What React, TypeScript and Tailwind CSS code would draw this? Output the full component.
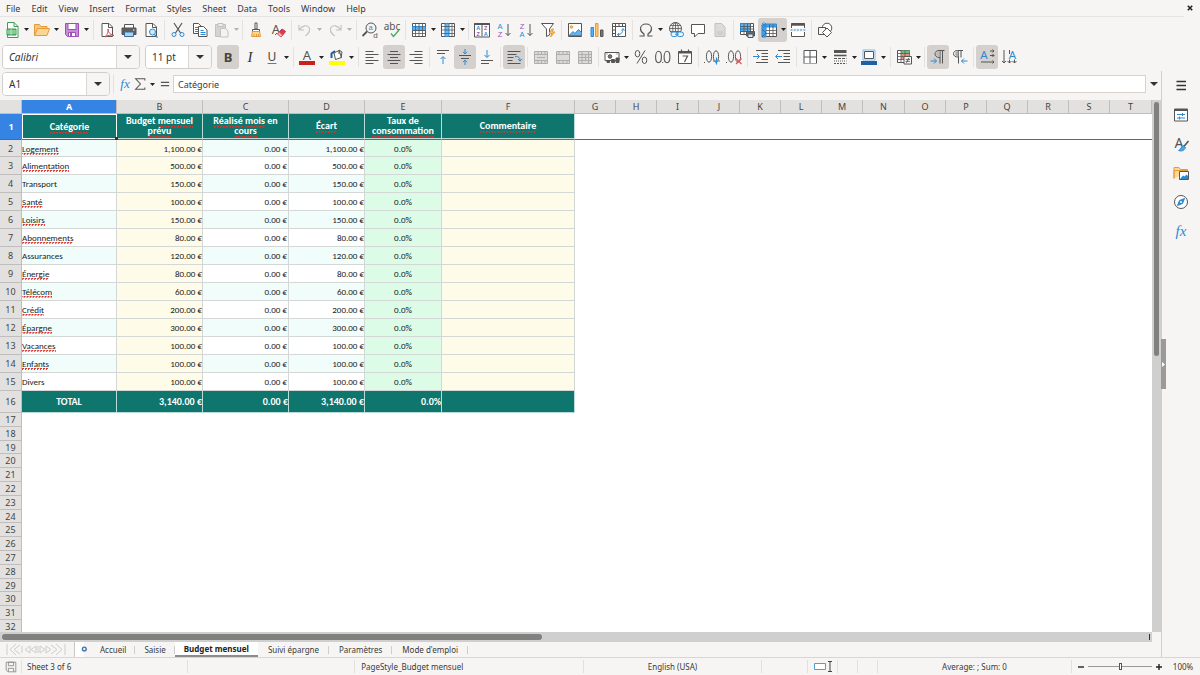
import React from "react";

const G = "#555555";
const B = "#2a8ad4";
const O = "#e59a3c";
const P = "#a04fb8";
const L = "#c4c2c0";

const ui = "font-['Noto_Sans',sans-serif]";
const cellFont = "font-[Carlito,Lato,sans-serif]";

function Svg({ children, size = "size-4" }: { children: React.ReactNode; size?: string }) {
  return (
    <svg viewBox="0 0 16 16" className={`${size} shrink-0 overflow-visible`} fill="none" stroke={G} strokeWidth="1" aria-hidden="true">
      {children}
    </svg>
  );
}

function Letter({ x, y, s, c = G, w = "400", f = "Noto Sans, sans-serif", i, children }: {
  x: number; y: number; s: number; c?: string; w?: string; f?: string; i?: boolean; children: string;
}) {
  return (
    <text x={x} y={y} fontSize={s} fill={c} stroke="none" fontWeight={w} fontFamily={f} fontStyle={i ? "italic" : "normal"} textAnchor="middle">
      {children}
    </text>
  );
}

const sans = "Liberation Sans, sans-serif";
const page = "M3 1.5h7l3.5 3.5v9.5H3z";

const icons: Record<string, React.ReactNode> = {
  newDoc: (<><path d="M3.500 .5h6.500l4 4v11h-10.500z" fill="#fff" stroke="#3f9c57" /><path d="M10 .5v4h4" stroke="#3f9c57" /><path d="M3 7h9v6H3z" fill="#57b96c" stroke="#3a9a50" /><path d="M3 9h9M3 11h9M7 7v6" stroke="#d9f3de" strokeWidth=".7" /></>),
  open: (<><path d="M.5 13.500V2.500h5l1.500 2h6v3" fill="#f7c774" stroke={O} /><path d="M.5 13.500 3.500 6.500h12l-2.500 7z" fill="#fbd793" stroke={O} /></>),
  save: (<><path d="M1.500 1.500h13v13h-11l-2-2z" fill="#c98bd8" stroke={P} /><path d="M4 1.500h8v6H4z" fill="#fff" stroke={P} /><path d="M4.500 10.500h7v4h-7z" fill="#fff" stroke={P} /><path d="M6 11v3h2v-3z" fill={P} stroke="none" /></>),
  pdf: (<><path d={page} fill="#fff" /><path d="M9.500 1.500v4h4" /><path d="M6 15c3-3 4-8 3-8s1 6 6 6.500c-3-1-7 0-9 1.500z" fill="#fff" stroke="#dc4452" /></>),
  print: (<><path d="M3.500 6V2.500h9V6" stroke={G} fill="#fff" /><path d="M1 6h14v6.500H1z" fill="#5c6063" stroke={G} /><path d="M3.500 10h9v4.500h-9z" fill="#a9d3f3" stroke="#3c6e96" /><path d="M12 8h1.500" stroke="#fff" /></>),
  preview: (<><path d={page} fill="#fff" /><path d="M9.500 1.500v4h4" /><circle cx="9.500" cy="10" r="3" fill="#cfe7f9" stroke={B} /><path d="m11.500 12.500 3 3" stroke={B} strokeWidth="1.300" /></>),
  cut: (<><path d="m4 1 6.500 10M12 1 5.500 11" strokeWidth="1.200" /><circle cx="4" cy="12.500" r="2" stroke={B} /><circle cx="12" cy="12.500" r="2" stroke={B} /></>),
  copy: (<><path d="M1.500 1.500h5l3 3v7h-8z" fill="#fff" /><path d="M3 5.500h3M3 7.500h3M3 9.500h3" stroke={B} /><path d="M6.500 4.500h5l3.500 3.500v6.500H6.500z" fill="#fff" /><path d="M8.500 8.500h3M8.500 10.500h5M8.500 12.500h5" stroke={B} /></>),
  paste: (<><path d="M1.500 2.500h10v12h-10z" fill="#d5d3d1" stroke={L} /><path d="M4 1.500h5v3H4z" fill="#eee" stroke={L} /><path d="M6.500 6.500h5l2.500 2.500v6H6.500z" fill="#f4f3f2" stroke={L} /></>),
  brush: (<><path d="M7 1h2v6H7z" fill="#fff" /><path d="M4.500 7.500h7v2h-7z" fill="#fff" /><path d="M4.500 9.500h7l1 5h-9z" fill="#fbd793" stroke={O} /><path d="M6 12v2M8.500 12v2M10.500 12v2" stroke={O} /></>),
  clear: (<><Letter x={6} y={11.500} s={13}>A</Letter><path d="m5 13 2-2M7.500 12 12 7l3.500 2.500-4 5z" fill="#e2394a" stroke="#c32a3c" /><path d="m7.500 12 1.500-2 3.500 3-1.500 2z" fill="#f5b9bf" stroke="#d66" /></>),
  undo: (<path d="M2 3v5h5M2.500 8C5 3.500 10 2.500 12 5.500S12 11 8.500 14" stroke={L} strokeWidth="1.200" />),
  redo: (<path d="M14 3v5H9M13.500 8C11 3.500 6 2.500 4 5.500S4 11 7.500 14" stroke={L} strokeWidth="1.200" />),
  find: (<><circle cx="9" cy="6" r="5" /><path d="M5 9.500.5 14" strokeWidth="1.800" /><Letter x={8.500} y={8} s={7.500} f={sans} c={B}>a</Letter><Letter x={13.500} y={15.500} s={8} f={sans}>d</Letter></>),
  spell: (<><Letter x={8} y={7.500} s={10}>abc</Letter><path d="m7 11.500 2.500 3L15 8" stroke="#3cae5a" strokeWidth="1.300" /></>),
  row: (<><path d="M1.500 1.500h13v13h-13z" fill="#fff" /><path d="M1.500 4.500h13v4h-13z" fill="#5cb0ef" stroke={B} /><path d="M1.500 11.500h13M4.500 1.500v13M8 1.500v13M11.500 1.500v13M1.500 8.500h13" strokeWidth=".8" /></>),
  col: (<><path d="M1.500 1.500h13v13h-13z" fill="#fff" /><path d="M5 1.500h4v13H5z" fill="#6bb9f2" stroke={B} /><path d="M1.500 4.500h13M1.500 8h13M1.500 11.500h13M12 1.500v13" strokeWidth=".8" /></>),
  sort: (<><path d="M.5 1.500h15v13.500H.5z" fill="#fff" /><path d="M.5 2h15" strokeWidth="2" /><path d="M8 1.500v13" /><Letter x={4.300} y={8} s={5.500} f={sans} c={B} w="700">A</Letter><Letter x={4.300} y={14} s={5.500} f={sans} c={P} w="700">Z</Letter><Letter x={11.800} y={8} s={5.500} f={sans} c={P} w="700">Z</Letter><Letter x={11.800} y={14} s={5.500} f={sans} c={B} w="700">A</Letter></>),
  az: (<><Letter x={4} y={6.500} s={7.500} f={sans} c={B}>A</Letter><Letter x={4} y={15} s={7.500} f={sans} c={P}>Z</Letter><path d="M12 2v11.500M9.500 11l2.500 2.500L14.500 11" /></>),
  za: (<><Letter x={4} y={6.500} s={7.500} f={sans} c={P}>Z</Letter><Letter x={4} y={15} s={7.500} f={sans} c={B}>A</Letter><path d="M12 2v11.500M9.500 11l2.500 2.500L14.500 11" /></>),
  filter: (<><path d="M1.500 1.500h12L9.500 7v6l-3 1.500V7z" fill="#fff" /><path d="m12 7-3 4.500h3L10.500 15l4.500-5h-3l1.500-3z" fill="#fbc56d" stroke={O} /></>),
  image: (<><path d="M1.500 1.500h13v13h-13z" fill="#fff" /><circle cx="4.500" cy="5" r="1.300" fill="#fbc56d" stroke={O} /><path d="m2 13.500 4-4 2 2 3.500-4 3 3v3z" fill="#6bb2e8" stroke={B} /></>),
  chart: (<><path d="M2 5.500h2.500v9H2z" fill="#5cb0ef" stroke={B} /><path d="M6.500 1.500H9v13H6.500z" fill="#fbc56d" stroke={O} /><path d="M11.500 8H14v6.500h-2.500z" fill="#777" /></>),
  pivot: (<><path d="M1.500 1.500h13v13h-13z" fill="#fff" /><path d="M1.500 4.500h13M4.500 1.500v13M8 1.500v3M11.500 1.500v3M1.500 8h3M1.500 11.500h3" /><path d="M6.500 12.500c4 0 5-2 5.500-5M10.500 8.500 12 6.500l1.500 2M8 11l-1.500 1.500L8 14" stroke={B} /></>),
  omega: (<path d="M1.500 14h4.500v-2C3.500 10.500 2.500 9 2.500 6.800 2.500 4 4.800 2 8 2s5.500 2 5.500 4.800c0 2.200-1 3.700-3.500 5.200v2h4.500" strokeWidth="1.200" />),
  link: (<><circle cx="7.500" cy="6.500" r="6" /><path d="M1.500 6.500h12M7.500.5v12M2.500 3.500h10M2.500 9.500h10" strokeWidth=".8" /><ellipse cx="7.500" cy="6.500" rx="2.800" ry="6" strokeWidth=".8" /><rect x="3" y="10" width="6.500" height="4.500" rx="2.200" fill="#f6f5f4" stroke={B} /><rect x="9" y="10" width="6.500" height="4.500" rx="2.200" fill="#f6f5f4" stroke={B} /><path d="M7 12.200h4" stroke={B} /></>),
  comment: (<path d="M1.500 2.500h13v9H8l-3.500 3.500v-3.500h-3z" fill="#fff" />),
  header: (<><path d="M3 1.500h6.500l3.500 3.500v9.500H3z" fill="#dddbd9" stroke={L} /><path d="M5 10h6M5 12h6" stroke={L} /></>),
  printArea: (<><path d="M1.500 1.500h13v11h-13z" fill="#fff" /><path d="M1.500 1.500h10v8h-10z" fill="#5cb0ef" stroke={B} /><path d="M1.500 4.500h13M1.500 7h13M1.500 9.500h13M5 1.500v11M8.500 1.500v11M11.500 1.500v11" strokeWidth=".8" /><path d="M7.500 9.500h8V14h-8z" fill="#596a7a" /><path d="M9 12h5v3.500H9z" fill="#d5e9f8" /></>),
  freeze: (<><path d="M2.500 2.500h13v12h-13z" fill="#fff" /><path d="M4 2h11.500v3H4z" fill="#4f9fe0" stroke={B} /><path d="M1 3h4v12H1z" fill="#4f9fe0" stroke={B} /><path d="M5 8.500h10.500M5 11.500h10.500M8.500 2.500v12M12 2.500v12" strokeWidth=".8" /><path d="M3 0v6M.5 3h5M1 1l4 4M5 1 1 5" stroke={B} strokeWidth=".8" /><path d="m1 7 4 4M5 11l-4 4" stroke="#15578f" strokeWidth=".7" /></>),
  split: (<><path d="M1.500 6V1.500h13V6M1.500 10v4.500h13V10" fill="#fff" /><path d="M1.500 2.500h13" strokeWidth="2.500" /><path d="M.5 8h15" stroke={B} strokeDasharray="2 1.200" /></>),
  shapes: (<><circle cx="10" cy="6" r="4.800" fill="#fff" /><path d="M1.500 5.500h7v7h-7z" fill="#f6f5f4" /><path d="m10 6 4.500 4.500L10 15l-4.500-4.500z" fill="#fff" /></>),
  fontColor: (<><Letter x={8} y={10.500} s={13}>A</Letter><path d="M0 12h16v4H0z" fill="#c9211e" stroke="none" /></>),
  highlight: (<><path d="m5 4 5-2.500 2.500 7-6 2z" fill="#fff" /><path d="M2.500 9V4.500L6 2" stroke="#1d5f97" strokeWidth="2" /><path d="M10 1v4M10 1l3 2-1 6" /><path d="M0 12h16v4H0z" fill="#ffff00" stroke="none" /></>),
  left: (<path d="M1.500 2.500h8M1.500 5.500h13M1.500 8.500h8M1.500 11.500h13M1.500 14.500h8" />),
  center: (<path d="M4 2.500h8M1.500 5.500h13M4 8.500h8M1.500 11.500h13M4 14.500h8" />),
  right: (<path d="M6.500 2.500h8M1.500 5.500h13M6.500 8.500h8M1.500 11.500h13M6.500 14.500h8" />),
  top: (<><path d="M2 1.500h12M2 4.500h8" /><path d="M8 15V8M5.500 10 8 7.500l2.500 2.500" stroke={B} /></>),
  middle: (<><path d="M2 6.500h12M4 9.500h8" /><path d="M8 0v4.500M6 2.800 8 5l2-2.200M8 16v-4.500M6 13.200 8 11l2 2.200" stroke={B} /></>),
  bottom: (<><path d="M2 11.500h12M2 14.500h8" /><path d="M8 1v7M5.500 6 8 8.500 10.500 6" stroke={B} /></>),
  wrap: (<><path d="M1.500 2.500h13M1.500 5.500h9M1.500 8.500h6M1.500 11.500h5M1.500 14.500h13" /><path d="M9 7.500c4 0 5 1 5 4.500M12 10l2 2.200L15.800 10" stroke={B} /></>),
  merge1: (<><path d="M1.500 2.500h13v12h-13z" fill="#dddbd9" stroke="#b0aeac" /><path d="M1.500 5.500h13M1.500 11.500h13M5 2.500v3M8.500 2.500v3M12 2.500v3M5 11.500v3M8.500 11.500v3M12 11.500v3M4 8.500h8" stroke="#b0aeac" /></>),
  merge2: (<><path d="M1.500 2.500h13v12h-13z" fill="#dddbd9" stroke="#b0aeac" /><path d="M1.500 5.500h13M1.500 11.500h13M4 2.500v3M8 2.500v3M12 2.500v3M4 11.500v3M8 11.500v3M12 11.500v3" stroke="#b0aeac" /></>),
  merge3: (<><path d="M1.500 2.500h13v12h-13z" fill="#dddbd9" stroke="#b0aeac" /><path d="M1.500 5.500h13M1.500 8.500h13M1.500 11.500h13M5 2.500v12M8.500 5v6M11.500 2.500v12" stroke="#b0aeac" /></>),
  currency: (<><path d="M1 3.500h14v8H1z" fill="#fff" /><circle cx="6" cy="7.500" r="1.800" fill="#777" /><path d="M2.500 5h1M12.500 5h1" /><path d="M7.500 13.500v-3h3v3zM12 13.500V9h3v4.500zM3 13.500V12h2.500v1.500z" fill={G} /></>),
  percent: (<><ellipse cx="4.500" cy="4.700" rx="2.300" ry="3.200" /><ellipse cx="11.500" cy="11.300" rx="2.300" ry="3.200" /><path d="M12 1.500 4 14.500" /></>),
  number: (<><ellipse cx="3.500" cy="8" rx="2.900" ry="5.700" strokeWidth="1.100" /><ellipse cx="12" cy="8" rx="2.900" ry="5.700" strokeWidth="1.100" /><path d="M7.200 13.500h1" /></>),
  date: (<><path d="M1.500 2.500h13v12h-13z" fill="#fff" /><path d="M1.500 3.500h13" strokeWidth="2" /><path d="M4.500.5v3M11.500.5v3M5.500 7h5L7.500 13" strokeWidth="1.200" /></>),
  addDec: (<><path d="M0 13.500h1" /><ellipse cx="5" cy="7.500" rx="2.600" ry="5.700" /><ellipse cx="12" cy="7.500" rx="2.600" ry="5.700" /><path d="M12.500 8.500v7M9 12h7" stroke={B} strokeWidth="1.200" /></>),
  delDec: (<><path d="M0 13.500h1" /><ellipse cx="5" cy="7.500" rx="2.600" ry="5.700" /><ellipse cx="12" cy="7.500" rx="2.600" ry="5.700" /><path d="m10 9.500 5.500 5.500M15.500 9.500 10 15" stroke="#e05252" strokeWidth="1.200" /></>),
  indent: (<><path d="M3 1.500h12M8.500 4.500H15M8.500 7.500H15M8.500 10.500H15M3 13.500h12" /><path d="M0 7.500h6M4 5l2.500 2.500L4 10" stroke={B} /></>),
  outdent: (<><path d="M3 1.500h12M8.500 4.500H15M8.500 7.500H15M8.500 10.500H15M3 13.500h12" /><path d="M1 7.500h6M3 5 .5 7.500 3 10" stroke={B} /></>),
  borders: (<><path d="M2 14.500V1.500h12.500v13" fill="#fff" /><path d="M8 1.500v13M2 8h12.500" /><path d="M1.500 14.500h13.500" stroke={O} /></>),
  lineStyle: (<><path d="M2 2.500h12.500" strokeWidth="3" /><path d="M2 6.500h12.500" strokeWidth="1.600" /><path d="M2 9.500h12.500" strokeDasharray="3 1" /><path d="M2 12h12.500" strokeDasharray="1 1" /><path d="M2 14.500h12.500" strokeDasharray="2 1" /></>),
  borderColor: (<><path d="M2 1h12v10H2z" fill="#fff" stroke="#7db9e8" /><path d="M3.500 2.500h9v7h-9z" /><path d="M0 12h16v4H0z" fill="#1f61a5" stroke="none" /></>),
  conditional: (<><path d="M1.500 1.500h12v12h-12z" fill="#fff" /><path d="M5 1.500h8.500v3H5z" fill="#69c07c" stroke="none" /><path d="M5 4.500h8.500v6H5z" fill="#ef8a83" stroke="none" /><path d="M1.500 4.500h12M1.500 7.500h12M1.500 10.500h12M5 1.500v12M9 1.500v12" strokeWidth=".8" /><path d="M8 7.500h7.500V15H8z" fill="#fff" /><path d="M9.500 10.300h4.500M9.500 12.300h4.500M13 8.800l-2.500 5" strokeWidth=".9" /></>),
  ltr: (<><path d="M10 8.500C3.500 9 3.500 1.500 9 1.500h5.500M10 1.500v13M12.500 1.500v13" /><path d="M9.500 2C5 2 5 8 9.500 8z" fill="#bbb" stroke="none" /><path d="M.5 12h6M4 9.500 6.500 12 4 14.500" stroke={B} /></>),
  rtl: (<><path d="M6.500 8C0 8.500 0 1.500 5.500 1.500H11M6.500 1.500v13M9 1.500v7" /><path d="M6.500 2C2 2 2 7.500 6.500 7.500z" fill="#aaa" stroke="none" /><path d="M15.500 12h-6M12 9.500 9.500 12l2.500 2.500" stroke={B} /></>),
  textH: (<><Letter x={5} y={9.500} s={11.500} c={B}>A</Letter><path d="M11 2h4M11 6.500h4M2 13h13M13.500.500 15 2l-1.500 1.500M13.500 5 15 6.500 13.500 8M13.500 11.500 15 13l-1.500 1.500" /></>),
  textV: (<><Letter x={11.500} y={9.500} s={11.500} c={B}>A</Letter><path d="M3 1v13M8.500 1v4M8.500 10.500V14M13.500 10.500V14M1 12l2 2 2-2M6.500 12l2 2 2-2M11.500 12l2 2 2-2" /></>),
  fx: (<Letter x={8} y={12.500} s={15} c={B} i f="Liberation Serif, serif">fx</Letter>),
  sigma: (<path d="M13.500 4V2H3l5.500 6L3 14h10.500v-2" strokeWidth="1.200" />),
  equals: (<path d="M2.500 5.800h11M2.500 10.200h11" strokeWidth="1.600" />),
  menu: (<path d="M3.500 3.500h9.500M3.500 7.500h9.500M3.500 11.500h9.500" stroke="#333" strokeWidth="1.400" />),
  props: (<><path d="M1.500 2h13v12h-13z" fill="#fff" /><path d="M1.500 3h13" strokeWidth="2" /><path d="M4 7.500h8M4 11h8M9.500 6v3M6.500 9.500v3" stroke={B} /></>),
  stylesA: (<><Letter x={6} y={11.500} s={14}>A</Letter><path d="m15.500 5-5 6" strokeWidth="1.600" /><path d="m10.500 9.500 2 2c-1.500 3.500-4 4-7 3 2-.5 2.500-4 5-5z" fill="#5a9fd8" stroke={B} /></>),
  gallery: (<><path d="M1 13.500V2.500h5l1.500 2h7v3" fill="#fbd793" stroke={O} /><path d="M1 13.500v-8h13.500" stroke={O} /><path d="M6.500 6.500h9v8h-9z" fill="#fff" /><path d="m7 14 3-3.500 1.500 1 2-2 1.500 1.500V14z" fill={B} stroke="none" /></>),
  compass: (<><circle cx="8" cy="8" r="6.500" fill="#fff" /><path d="m11.500 4.500-2 5-5 2 2-5z" fill={B} stroke={B} /><circle cx="8" cy="8" r="1" fill="#fff" stroke="none" /></>),
  statusSave: (<><path d="M2.500 2.500h11v11h-9l-2-2z" stroke="#8a8a88" /><path d="M5 2.500h6v4H5zM5 13.500v-4h6v4" stroke="#8a8a88" /></>),
  newSheet: (<><path d="M0 0h10v16H0z" fill="#fff" stroke="none" /><path d="M.5 16V0" stroke={L} /><circle cx="11" cy="7.500" r="2" stroke="#3d6fb4" strokeWidth="1.500" /></>),
};

const Ic = ({ n, size }: { n: string; size?: string }) => <Svg size={size}>{icons[n]}</Svg>;

function Caret({ dim }: { dim?: boolean }) {
  return (
    <svg viewBox="0 0 5 3" className="h-[3px] w-[5px] shrink-0" aria-hidden="true">
      <path d="M0 0h5L2.500 3z" fill={dim ? "#b5b3b1" : "#222"} />
    </svg>
  );
}

type Item = { n: string; label: string; drop?: 29 | 30; on?: boolean; dim?: boolean };

function Tool({ n, label, drop, on, dim }: Item) {
  const width = drop === 30 ? "w-[30px]" : drop === 29 ? "w-[29px]" : "w-[22px]";
  return (
    <button type="button" aria-label={label} aria-pressed={on} className={`${width} flex h-6 shrink-0 items-center gap-[4px] rounded-[3px] pl-[3px] ${on ? "bg-[#d3d0cd]" : ""}`}>
      {n === "bold" ? <span className="w-4 text-center text-[13px] font-bold text-[#444]">B</span>
        : n === "italic" ? <span className="w-4 text-center font-['Liberation_Serif',serif] text-[15px] italic text-[#333]">I</span>
        : n === "underline" ? <span className="w-4 text-center text-[12px] text-[#444] underline decoration-[#2a8ad4] decoration-1 underline-offset-2">U</span>
        : <Ic n={n} />}
      {drop && <Caret dim={dim} />}
    </button>
  );
}

function Groups({ groups }: { groups: Item[][] }) {
  return (
    <>
      {groups.map((g, i) => (
        <React.Fragment key={i}>
          {i > 0 && <span className="ml-[2px] mr-[2px] h-5 w-px shrink-0 bg-[#e4e2e0]" />}
          {g.map((t) => <Tool key={t.label} {...t} />)}
        </React.Fragment>
      ))}
    </>
  );
}

const standard: Item[][] = [
  [{ n: "newDoc", label: "New", drop: 30 }, { n: "open", label: "Open", drop: 30 }, { n: "save", label: "Save", drop: 30 }],
  [{ n: "pdf", label: "Export as PDF" }, { n: "print", label: "Print" }, { n: "preview", label: "Print Preview" }],
  [{ n: "cut", label: "Cut" }, { n: "copy", label: "Copy" }, { n: "paste", label: "Paste", drop: 29, dim: true }],
  [{ n: "brush", label: "Clone Formatting" }, { n: "clear", label: "Clear Formatting" }],
  [{ n: "undo", label: "Undo", drop: 30, dim: true }, { n: "redo", label: "Redo", drop: 30, dim: true }],
  [{ n: "find", label: "Find and Replace" }, { n: "spell", label: "Spelling" }],
  [{ n: "row", label: "Row", drop: 29 }, { n: "col", label: "Column", drop: 29 }],
  [{ n: "sort", label: "Sort" }, { n: "az", label: "Sort Ascending" }, { n: "za", label: "Sort Descending" }, { n: "filter", label: "AutoFilter" }],
  [{ n: "image", label: "Insert Image" }, { n: "chart", label: "Insert Chart" }, { n: "pivot", label: "Pivot Table" }],
  [{ n: "omega", label: "Special Character", drop: 30 }, { n: "link", label: "Insert Hyperlink" }, { n: "comment", label: "Insert Comment" }, { n: "header", label: "Headers and Footers" }],
  [{ n: "printArea", label: "Define Print Area" }, { n: "freeze", label: "Freeze Rows and Columns", drop: 29, on: true }, { n: "split", label: "Split Window" }],
  [{ n: "shapes", label: "Show Draw Functions" }],
];

const formatting: Item[][] = [
  [{ n: "bold", label: "Bold", on: true }, { n: "italic", label: "Italic" }, { n: "underline", label: "Underline", drop: 30 }],
  [{ n: "fontColor", label: "Font Color", drop: 30 }, { n: "highlight", label: "Background Color", drop: 30 }],
  [{ n: "left", label: "Align Left" }, { n: "center", label: "Center Horizontally", on: true }, { n: "right", label: "Align Right" }],
  [{ n: "top", label: "Align Top" }, { n: "middle", label: "Center Vertically", on: true }, { n: "bottom", label: "Align Bottom" }],
  [{ n: "wrap", label: "Wrap Text", on: true }],
  [{ n: "merge1", label: "Merge and Center" }, { n: "merge2", label: "Merge Cells" }, { n: "merge3", label: "Unmerge Cells" }],
  [{ n: "currency", label: "Format as Currency", drop: 29 }, { n: "percent", label: "Format as Percent" }, { n: "number", label: "Format as Number" }, { n: "date", label: "Format as Date" }],
  [{ n: "addDec", label: "Add Decimal Place" }, { n: "delDec", label: "Delete Decimal Place" }],
  [{ n: "indent", label: "Increase Indent" }, { n: "outdent", label: "Decrease Indent" }],
  [{ n: "borders", label: "Borders", drop: 30 }, { n: "lineStyle", label: "Border Style", drop: 29 }, { n: "borderColor", label: "Border Color", drop: 30 }],
  [{ n: "conditional", label: "Conditional", drop: 29 }],
  [{ n: "ltr", label: "Left-To-Right", on: true }, { n: "rtl", label: "Right-To-Left" }],
  [{ n: "textH", label: "Text direction from left to right", on: true }, { n: "textV", label: "Text direction from top to bottom" }],
];

function Combo({ label, value, width, italic }: { label: string; value: string; width: string; italic?: boolean }) {
  return (
    <div className={`${width} flex h-6 shrink-0 overflow-hidden rounded-[4px] border border-[#d0cdca] bg-white`}>
      <input aria-label={label} defaultValue={value} className={`min-w-0 flex-1 bg-white pl-[6px] text-[10px] text-[#2e3436] outline-none ${italic ? "italic" : ""}`} />
      <button type="button" aria-label={`${label} list`} className="flex w-[23px] items-center justify-center border-l border-[#d9d6d3] bg-[#f6f5f4]">
        <svg viewBox="0 0 8 4" className="h-1 w-2" aria-hidden="true"><path d="M0 0h8L4 4z" fill="#333" /></svg>
      </button>
    </div>
  );
}

const menus = ["File", "Edit", "View", "Insert", "Format", "Styles", "Sheet", "Data", "Tools", "Window", "Help"];
const letters = "ABCDEFGHIJKLMNOPQRST".split("");
const colWidths = ["w-[22px]", "w-[95px]", "w-[86px]", "w-[86px]", "w-[76px]", "w-[77px]", "w-[133px]", "w-[41px]", "w-[41px]", "w-[42px]", "w-[41px]", "w-[41px]", "w-[41px]", "w-[41px]", "w-[42px]", "w-[41px]", "w-[41px]", "w-[41px]", "w-[41px]", "w-[41px]", ""];

// Words between asterisks are flagged by the spelling checker.
const headers = ["*Catégorie*", "Budget *mensuel* *prévu*", "*Réalisé* *mois* en *cours*", "*Écart*", "Taux de *consommation*", "*Commentaire*"];
const rows: [string, string][] = [
  ["*Logement*", "1,100.00 €"], ["*Alimentation*", "500.00 €"], ["Transport", "150.00 €"], ["*Santé*", "100.00 €"],
  ["*Loisirs*", "150.00 €"], ["*Abonnements*", "80.00 €"], ["Assurances", "120.00 €"], ["*Énergie*", "80.00 €"],
  ["*Télécom*", "60.00 €"], ["*Crédit*", "200.00 €"], ["*Épargne*", "300.00 €"], ["*Vacances*", "100.00 €"],
  ["*Enfants*", "100.00 €"], ["Divers", "100.00 €"],
];

function Spelled({ text }: { text: string }) {
  return (
    <>
      {text.split("*").map((part, i) => i % 2
        ? <span key={i} className="bg-[linear-gradient(135deg,#e0302a_50%,transparent_50%)] bg-[length:3px_2px] bg-bottom bg-repeat-x pb-px">{part}</span>
        : part)}
    </>
  );
}

const rowHead = "border-r border-b border-[#c0bebc] bg-[#e3e1df] p-0 text-center align-middle text-[9px] font-normal text-[#444]";

function Sheet() {
  return (
    <table className="w-full table-fixed border-separate border-spacing-0 leading-none">
      <colgroup>{colWidths.map((w, i) => <col key={i} className={w} />)}</colgroup>
      <thead>
        <tr className="h-[14px]">
          <th className={rowHead} aria-label="Select all" />
          {letters.map((l) => (
            <th key={l} scope="col" className={`h-[14px] border-r border-b border-[#c0bebc] p-0 text-[9px] ${l === "A" ? "bg-[#3584e4] font-bold text-white" : "bg-[#e3e1df] font-normal text-[#444]"}`}>{l}</th>
          ))}
        </tr>
      </thead>
      <tbody>
        <tr className="h-[25px]">
          <th scope="row" className="h-[25px] bg-[#3584e4] p-0 text-center text-[9px] font-bold text-white">1</th>
          {headers.map((h, i) => (
            <td key={h} className={`${cellFont} ${i === 0 ? "relative border border-white" : "border-r border-b border-[#b9dcd8]"} bg-[#0f766e] px-[4px] py-0 text-center align-middle text-[10px] font-bold leading-[10px] text-white`}>
              <Spelled text={h} />
              {i === 0 && <span className="absolute -right-[2px] -bottom-[2px] z-10 size-[3px] bg-[#333]" />}
            </td>
          ))}
          <td colSpan={14} />
        </tr>
        {rows.map(([name, amount], i) => {
          const first = i === 0 ? "border-t border-t-[#666]" : "";
          const stripe = i % 2 ? "bg-white" : "bg-[#f0fdfa]";
          const cell = `${first} ${cellFont} border-r border-b border-r-[#d3d8d6] border-b-[#d3d8d6] py-0 align-middle text-[9px] text-[#1a1a1a] whitespace-nowrap`;
          return (
            <tr key={name} className="h-[18px]">
              <th scope="row" className={`${rowHead} h-[18px] ${first}`}>{i + 2}</th>
              <td className={`${cell} ${stripe} px-0 text-left`}><Spelled text={name} /></td>
              <td className={`${cell} bg-[#fefce8] px-0 text-right`}>{amount}</td>
              <td className={`${cell} ${stripe} px-px text-right`}>0.00 €</td>
              <td className={`${cell} ${stripe} px-0 text-right`}>{amount}</td>
              <td className={`${cell} bg-[#dcfce7] px-0 text-center`}>0.0%</td>
              <td className={`${cell} bg-[#fefce8] px-0`} />
              <td colSpan={14} className={first} />
            </tr>
          );
        })}
        <tr className="h-[22px]">
          <th scope="row" className={`${rowHead} h-[22px]`}>16</th>
          {["TOTAL", "3,140.00 €", "0.00 €", "3,140.00 €", "0.0%", ""].map((v, i) => (
            <td key={i} className={`${cellFont} border-r border-b border-[#b9dcd8] bg-[#0f766e] p-0 align-middle text-[10px] font-bold whitespace-nowrap text-white ${i === 0 ? "text-center" : "text-right"}`}>{v}</td>
          ))}
          <td colSpan={14} />
        </tr>
        {Array.from({ length: 16 }, (_, i) => (
          <tr key={i}>
            <th scope="row" className={`${rowHead} ${i % 5 === 2 ? "h-[13px]" : "h-[14px]"}`}>{i + 17}</th>
            <td colSpan={20} />
          </tr>
        ))}
      </tbody>
    </table>
  );
}

const tabs = ["Accueil", "Saisie", "Budget mensuel", "Suivi épargne", "Paramètres", "Mode d'emploi"];

export default function App() {
  return (
    <div className={`${ui} flex h-screen flex-col overflow-hidden bg-[#f6f5f4] text-[9px] leading-none text-[#3a3a3a]`}>
      <header className="shrink-0">
        <nav className="mr-4 flex h-[17px] items-center gap-[11px] border-b border-[#e6e4e2] pl-[6px]">
          {menus.map((m) => <button key={m} type="button">{m}</button>)}
          <button type="button" aria-label="Close document" className="-mr-[9px] ml-auto">
            <svg viewBox="0 0 6 6" className="size-[6px]" aria-hidden="true"><path d="m.8.8 4.400 4.400M5.200.8.8 5.200" stroke="#222" strokeWidth="1.600" /></svg>
          </button>
        </nav>
        <div className="flex h-[27px] items-center pb-[2px] pl-px"><Groups groups={standard} /></div>
        <div className="flex h-[27px] items-center pb-px pl-[2px]">
          <Combo label="Font Name" value="Calibri" width="w-[138px]" italic />
          <span className="w-[5px] shrink-0" />
          <Combo label="Font Size" value="11 pt" width="w-[67px]" />
          <span className="w-[5px] shrink-0" />
          <Groups groups={formatting} />
        </div>
      </header>

      <div className="flex min-h-0 flex-1">
        <main className="flex min-w-0 flex-1 flex-col">
          <div className="flex h-[29px] shrink-0 items-center pb-[3px] pl-[2px]">
            <Combo label="Name Box" value="A1" width="w-[108px]" />
            <span className="mx-[3px] h-5 w-px bg-[#e4e2e0]" />
            <button type="button" aria-label="Function Wizard" className="flex w-4 justify-center"><Ic n="fx" size="size-[14px]" /></button>
            <button type="button" aria-label="Select Function" className="flex w-[24px] items-center gap-[3px]"><Ic n="sigma" size="size-[14px]" /><Caret /></button>
            <button type="button" aria-label="Formula" className="flex w-[16px] justify-center"><Ic n="equals" size="size-[12px]" /></button>
            <input aria-label="Input line" defaultValue="Catégorie" className="h-[18px] min-w-0 flex-1 border border-[#d5d2cf] bg-white pl-[4px] text-[9px] text-[#3a3a3a] outline-none" />
            <button type="button" aria-label="Expand Formula Bar" className="flex w-[15px] items-center justify-center">
              <svg viewBox="0 0 8 4" className="h-1 w-2" aria-hidden="true"><path d="M0 0h8L4 4z" fill="#333" /></svg>
            </button>
          </div>
          <div className="flex min-h-0 flex-1">
            <div className="min-w-0 flex-1 overflow-hidden bg-white"><Sheet /></div>
            <div className="w-[9px] shrink-0 bg-[#cfcfcf] px-[2px] pt-[2px]"><div className="h-[48%] rounded-full bg-[#80807e]" /></div>
          </div>
          <div className="mr-[9px] flex h-[10px] shrink-0 items-center justify-between bg-[#cfcfcf] px-[2px]">
            <div className="h-[6px] w-[47%] rounded-full bg-[#80807e]" />
            <div className="h-[6px] w-px bg-[#333]" />
          </div>
          <div className="flex h-[15px] shrink-0 items-stretch text-[8px]">
            <button type="button" aria-label="Scroll sheets" className="ml-[6px] w-[60px]">
              <svg viewBox="0 0 60 13" className="h-[13px] w-[60px]" fill="none" stroke="#cfcdcb" aria-hidden="true">
                <path d="M1 1v11M10 1 4 6.500 10 12M14 2 8 6.500l6 4.500M16 3v7M24 3l-5 3.500 5 3.500zM30 3l-5 3.500 5 3.500zM32 3v7M34 3l5 3.500-5 3.500zM40 3l5 3.500-5 3.500zM45 2l6 4.500-6 4.500M50 1l6 5.500-6 5.500M59 1v11" />
              </svg>
            </button>
            <button type="button" aria-label="Add sheet" className="ml-[8px] w-[17px]"><Ic n="newSheet" size="size-[15px]" /></button>
            {tabs.map((t, i) => (
              <button key={t} type="button" className={`whitespace-nowrap ${i === 2 ? "border-b-2 border-[#8c8c8a] bg-white px-[9px] font-bold text-[#222]" : "bg-[linear-gradient(#cfcdcb,#cfcdcb)] bg-[length:1px_8px] bg-right bg-no-repeat"} ${i < 2 ? "px-[9px]" : i > 2 ? "px-[10px]" : ""}`}>{t}</button>
            ))}
          </div>
        </main>
        <aside className="relative flex w-[39px] shrink-0 flex-col items-center gap-[13px] border-l border-[#d0cecb] pt-[7px]">
          {[["menu", "Sidebar Settings"], ["props", "Properties"], ["stylesA", "Styles"], ["gallery", "Gallery"], ["compass", "Navigator"], ["fx", "Functions"]].map(([n, l]) => (
            <button key={n} type="button" aria-label={l} className="size-4"><Ic n={n} /></button>
          ))}
          <button type="button" aria-label="Hide Sidebar" className="absolute top-[268px] -left-px flex h-[50px] w-[5px] items-center justify-center bg-[#9c9a98]">
            <svg viewBox="0 0 3 5" className="h-[5px] w-[3px]" aria-hidden="true"><path d="M0 0v5l3-2.500z" fill="#fff" /></svg>
          </button>
        </aside>
      </div>

      <footer className="flex h-[18px] shrink-0 items-center border-t border-[#d8d6d3] text-[8px] [&>span]:flex [&>span]:h-[13px] [&>span]:items-center [&>span]:border-r [&>span]:border-[#e2e0de]">
        <span className="w-[22px] justify-center"><Ic n="statusSave" size="size-[14px]" /></span>
        <span className="flex-[166] indent-[5px]">Sheet 3 of 6</span>
        <span className="flex-[167]" />
        <span className="flex-[229] indent-[6px]">PageStyle_Budget mensuel</span>
        <span className="flex-[178] justify-center">English (USA)</span>
        <span className="w-[46px]" />
        <span className="w-[30px] justify-center gap-[4px]">
          <svg viewBox="0 0 18 11" className="h-[11px] w-[18px]" fill="none" aria-hidden="true">
            <path d="M.5 2.500h11v6H.5z" fill="#fff" stroke="#4f9fd0" /><path d="M14 .500h4M14 10.500h4M16 .500v10" stroke="#444" />
          </svg>
        </span>
        <span className="w-[20px]" />
        <span className="w-[20px]" />
        <span className="flex-[194] justify-center">Average: ; Sum: 0</span>
        <button type="button" aria-label="Zoom Out" className="ml-[5px] flex w-[8px] justify-center"><svg viewBox="0 0 6 6" className="size-[6px]" aria-hidden="true"><path d="M0 3h6" stroke="#222" strokeWidth="1.400" /></svg></button>
        <input type="range" aria-label="Zoom" defaultValue={50} className="mx-[3px] h-[8px] w-[64px] appearance-none bg-[linear-gradient(#999,#999)] bg-[length:100%_1px] bg-center bg-no-repeat [&::-webkit-slider-thumb]:h-[7px] [&::-webkit-slider-thumb]:w-[3px] [&::-webkit-slider-thumb]:appearance-none [&::-webkit-slider-thumb]:border [&::-webkit-slider-thumb]:border-[#555] [&::-webkit-slider-thumb]:bg-white" />
        <button type="button" aria-label="Zoom In" className="flex w-[8px] justify-center"><svg viewBox="0 0 6 6" className="size-[6px]" aria-hidden="true"><path d="M0 3h6M3 0v6" stroke="#222" strokeWidth="1.400" /></svg></button>
        <output className="w-[37px] pl-[3px] text-center">100%</output>
      </footer>
    </div>
  );
}
